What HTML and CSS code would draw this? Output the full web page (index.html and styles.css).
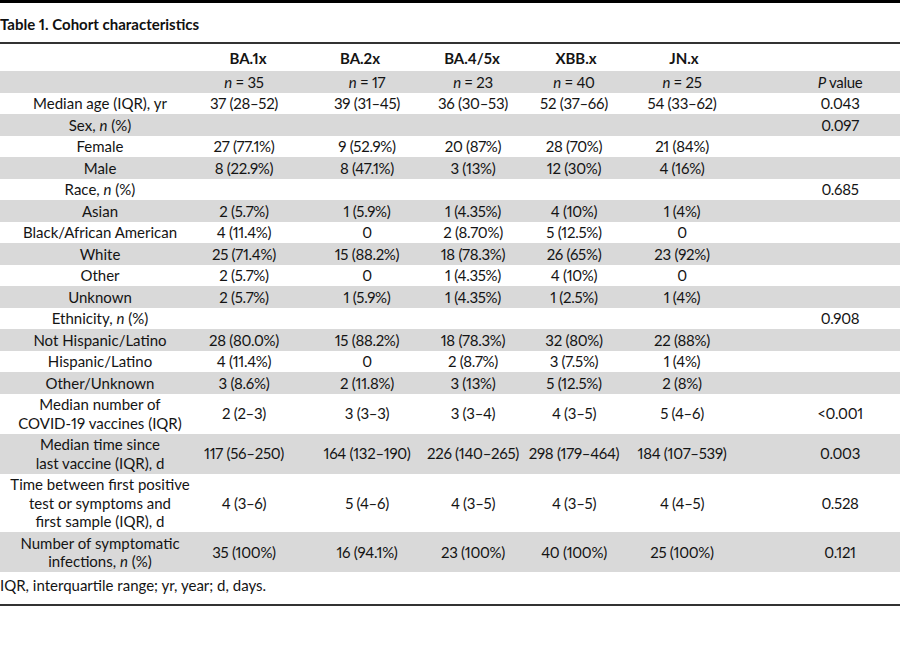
FILE: index.html
```html
<!DOCTYPE html>
<html lang="en">
<head>
<meta charset="utf-8">
<title>Table 1. Cohort characteristics</title>
<link rel="stylesheet" href="styles.css">
</head>
<body>
<div class="page">
  <div class="topbar"></div>
  <h1 class="title">Table 1. Cohort characteristics</h1>
  <table class="tbl">
    <colgroup>
      <col class="w0"><col class="w1"><col class="w2"><col class="w3"><col class="w4"><col class="w5"><col class="w6">
    </colgroup>
    <thead>
      <tr class="head">
        <th class="c0"></th><th class="c1">BA.1x</th><th class="c2">BA.2x</th><th class="c3">BA.4/5x</th><th class="c4">XBB.x</th><th class="c5">JN.x</th><th class="c6"></th>
      </tr>
    </thead>
    <tbody>
      <tr class="g"><td class="c0"></td><td class="c1"><i>n</i> = 35</td><td class="c2"><i>n</i> = 17</td><td class="c3"><i>n</i> = 23</td><td class="c4"><i>n</i> = 40</td><td class="c5"><i>n</i> = 25</td><td class="c6"><i>P</i> value</td></tr>
      <tr><td class="c0">Median age (IQR), yr</td><td class="c1">37 (28–52)</td><td class="c2">39 (31–45)</td><td class="c3">36 (30–53)</td><td class="c4">52 (37–66)</td><td class="c5">54 (33–62)</td><td class="c6">0.043</td></tr>
      <tr class="g"><td class="c0">Sex, <i>n</i> (%)</td><td class="c1"></td><td class="c2"></td><td class="c3"></td><td class="c4"></td><td class="c5"></td><td class="c6">0.097</td></tr>
      <tr><td class="c0">Female</td><td class="c1">27 (77.1%)</td><td class="c2">9 (52.9%)</td><td class="c3">20 (87%)</td><td class="c4">28 (70%)</td><td class="c5">21 (84%)</td><td class="c6"></td></tr>
      <tr class="g"><td class="c0">Male</td><td class="c1">8 (22.9%)</td><td class="c2">8 (47.1%)</td><td class="c3">3 (13%)</td><td class="c4">12 (30%)</td><td class="c5">4 (16%)</td><td class="c6"></td></tr>
      <tr><td class="c0">Race, <i>n</i> (%)</td><td class="c1"></td><td class="c2"></td><td class="c3"></td><td class="c4"></td><td class="c5"></td><td class="c6">0.685</td></tr>
      <tr class="g"><td class="c0">Asian</td><td class="c1">2 (5.7%)</td><td class="c2">1 (5.9%)</td><td class="c3">1 (4.35%)</td><td class="c4">4 (10%)</td><td class="c5">1 (4%)</td><td class="c6"></td></tr>
      <tr><td class="c0">Black/African American</td><td class="c1">4 (11.4%)</td><td class="c2">0</td><td class="c3">2 (8.70%)</td><td class="c4">5 (12.5%)</td><td class="c5">0</td><td class="c6"></td></tr>
      <tr class="g"><td class="c0">White</td><td class="c1">25 (71.4%)</td><td class="c2">15 (88.2%)</td><td class="c3">18 (78.3%)</td><td class="c4">26 (65%)</td><td class="c5">23 (92%)</td><td class="c6"></td></tr>
      <tr><td class="c0">Other</td><td class="c1">2 (5.7%)</td><td class="c2">0</td><td class="c3">1 (4.35%)</td><td class="c4">4 (10%)</td><td class="c5">0</td><td class="c6"></td></tr>
      <tr class="g"><td class="c0">Unknown</td><td class="c1">2 (5.7%)</td><td class="c2">1 (5.9%)</td><td class="c3">1 (4.35%)</td><td class="c4">1 (2.5%)</td><td class="c5">1 (4%)</td><td class="c6"></td></tr>
      <tr><td class="c0">Ethnicity, <i>n</i> (%)</td><td class="c1"></td><td class="c2"></td><td class="c3"></td><td class="c4"></td><td class="c5"></td><td class="c6">0.908</td></tr>
      <tr class="g"><td class="c0">Not Hispanic/Latino</td><td class="c1">28 (80.0%)</td><td class="c2">15 (88.2%)</td><td class="c3">18 (78.3%)</td><td class="c4">32 (80%)</td><td class="c5">22 (88%)</td><td class="c6"></td></tr>
      <tr><td class="c0">Hispanic/Latino</td><td class="c1">4 (11.4%)</td><td class="c2">0</td><td class="c3">2 (8.7%)</td><td class="c4">3 (7.5%)</td><td class="c5">1 (4%)</td><td class="c6"></td></tr>
      <tr class="g"><td class="c0">Other/Unknown</td><td class="c1">3 (8.6%)</td><td class="c2">2 (11.8%)</td><td class="c3">3 (13%)</td><td class="c4">5 (12.5%)</td><td class="c5">2 (8%)</td><td class="c6"></td></tr>
      <tr><td class="c0">Median number of<br>COVID-19 vaccines (IQR)</td><td class="c1">2 (2–3)</td><td class="c2">3 (3–3)</td><td class="c3">3 (3–4)</td><td class="c4">4 (3–5)</td><td class="c5">5 (4–6)</td><td class="c6">&lt;0.001</td></tr>
      <tr class="g"><td class="c0">Median time since<br>last vaccine (IQR), d</td><td class="c1">117 (56–250)</td><td class="c2">164 (132–190)</td><td class="c3">226 (140–265)</td><td class="c4">298 (179–464)</td><td class="c5">184 (107–539)</td><td class="c6">0.003</td></tr>
      <tr><td class="c0">Time between first positive<br>test or symptoms and<br>first sample (IQR), d</td><td class="c1">4 (3–6)</td><td class="c2">5 (4–6)</td><td class="c3">4 (3–5)</td><td class="c4">4 (3–5)</td><td class="c5">4 (4–5)</td><td class="c6">0.528</td></tr>
      <tr class="g"><td class="c0">Number of symptomatic<br>infections, <i>n</i> (%)</td><td class="c1">35 (100%)</td><td class="c2">16 (94.1%)</td><td class="c3">23 (100%)</td><td class="c4">40 (100%)</td><td class="c5">25 (100%)</td><td class="c6">0.121</td></tr>
    </tbody>
  </table>
  <p class="foot">IQR, interquartile range; yr, year; d, days.</p>
</div>
</body>
</html>
```

FILE: styles.css
```css
html, body {
  margin: 0;
  padding: 0;
  background: #ffffff;
}
body {
  font-family: Lato, "Liberation Sans", sans-serif;
  font-size: 15px;
  color: #141414;
  font-variant-numeric: proportional-nums;
}
.page {
  width: 900px;
}
.topbar {
  height: 3px;
  background: #000000;
}
.title {
  margin: 0;
  padding: 12px 0 0 0;
  height: 27px;
  font-size: 15px;
  font-weight: 700;
  line-height: 19px;
  color: #111111;
  border-bottom: 2px solid #333333;
}
.tbl {
  width: 900px;
  table-layout: fixed;
  border-collapse: collapse;
  border-spacing: 0;
}
.w0 { width: 196px; }
.w1 { width: 104px; }
.w2 { width: 120px; }
.w3 { width: 104px; }
.w4 { width: 104px; }
.w5 { width: 112px; }
.w6 { width: 160px; }
.tbl th,
.tbl td {
  padding: 1.5px 0;
  line-height: 18.5px;
  text-align: center;
  vertical-align: middle;
  white-space: nowrap;
  font-weight: 400;
}
.tbl td.c1,
.tbl td.c2,
.tbl td.c3,
.tbl td.c4,
.tbl td.c5,
.tbl td.c6 {
  letter-spacing: -0.3px;
}
.tbl .head th {
  font-weight: 700;
  height: 26px;
  padding: 0;
  padding-top: 1px;
}
.tbl .g td {
  background: #d9d9d9;
}
.tbl .c0 { padding-left: 4px; }
.tbl .c1 { padding-right: 8px; }
.tbl .c2 { padding-left: 14px; }
.tbl .c3 { padding-left: 2px; }
.tbl .c4 { padding-right: 4px; }
.tbl .c5 { padding-right: 4px; }
.tbl .c6 { padding-left: 40px; }
.foot {
  margin: 0;
  padding: 4px 0 9px 0;
  line-height: 19px;
  border-bottom: 2px solid #333333;
}
```
